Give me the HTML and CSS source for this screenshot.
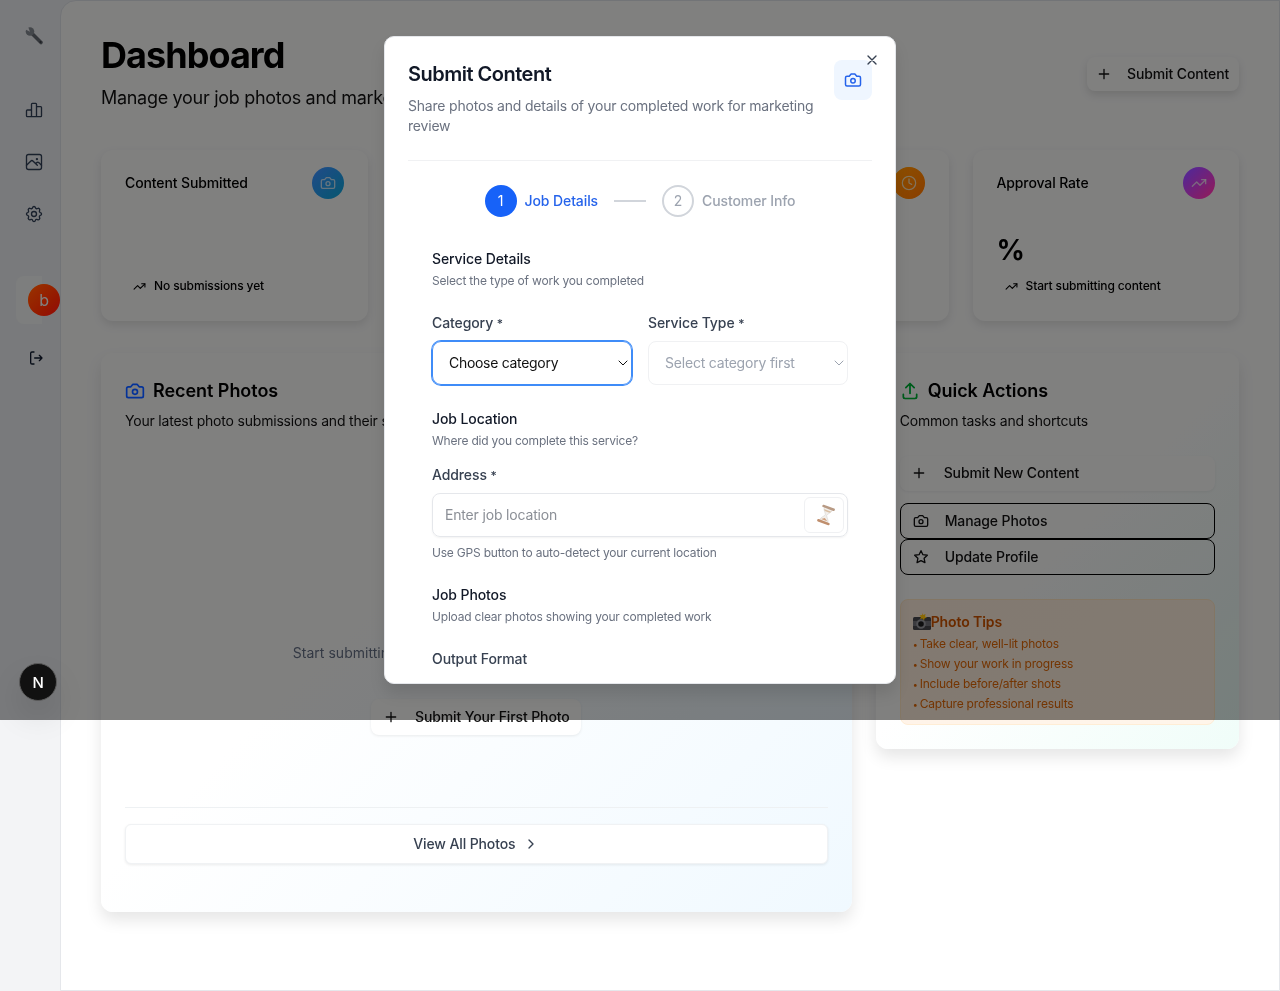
FILE: index.html
```html
<!DOCTYPE html>
<html lang="en">
  <head>
    <meta charset="UTF-8" />
    <meta name="viewport" content="width=device-width, initial-scale=1.0" />
    <title>Dashboard</title>
    <link rel="stylesheet" href="styles.css">
  </head>
  <body>
    <svg class="sprite" aria-hidden="true">
      <symbol id="i-camera" viewBox="0 0 24 24"><path d="M14.5 4h-5L7 7H4a2 2 0 0 0-2 2v9a2 2 0 0 0 2 2h16a2 2 0 0 0 2-2V9a2 2 0 0 0-2-2h-3l-2.5-3z"/><circle cx="12" cy="13" r="3"/></symbol>
      <symbol id="i-trend" viewBox="0 0 24 24"><polyline points="22 7 13.5 15.5 8.5 10.5 2 17"/><polyline points="16 7 22 7 22 13"/></symbol>
      <symbol id="i-plus" viewBox="0 0 24 24"><path d="M5 12h14M12 5v14"/></symbol>
      <symbol id="i-chev" viewBox="0 0 24 24"><path d="m6 9 6 6 6-6"/></symbol>
    </svg>

    <div class="app">
      <aside class="sidebar">
        <svg class="logo" viewBox="0 0 20 20">
          <path d="M7.500 7 17 16.500" stroke="#6a6d73" stroke-width="3.600"/>
          <circle cx="6" cy="5.500" r="4.300" fill="#8a8d93" stroke="none"/>
          <path d="M.5 3 6 5.800 4 .5z" fill="#f3f4f6" stroke="none"/>
          <circle cx="16.500" cy="16" r="1" fill="#3c3e42" stroke="none"/>
        </svg>
        <nav class="side-nav">
          <svg class="side-icon" viewBox="0 0 24 24"><path d="M3 13a1 1 0 0 1 1-1h4a1 1 0 0 1 1 1v6a1 1 0 0 1-1 1H4a1 1 0 0 1-1-1zM15 9a1 1 0 0 1 1-1h4a1 1 0 0 1 1 1v10a1 1 0 0 1-1 1h-4a1 1 0 0 1-1-1zM9 5a1 1 0 0 1 1-1h4a1 1 0 0 1 1 1v14a1 1 0 0 1-1 1h-4a1 1 0 0 1-1-1z"/></svg>
          <svg class="side-icon" viewBox="0 0 24 24"><rect x="3" y="3" width="18" height="18" rx="2.500"/><circle cx="15.500" cy="8.500" r=".6"/><path d="m3 16 5-5c1-1 2-1 3 0l5 5M14 14l1-1c1-1 2-1 3 0l3 3"/></svg>
          <svg class="side-icon" viewBox="0 0 24 24"><path d="M10.300 4.300c.4-1.800 3-1.800 3.400 0a1.700 1.700 0 0 0 2.600 1.100c1.500-.9 3.300.8 2.400 2.400a1.700 1.700 0 0 0 1 2.500c1.800.4 1.800 3 0 3.400a1.700 1.700 0 0 0-1 2.600c.9 1.500-.9 3.300-2.400 2.400a1.700 1.700 0 0 0-2.600 1c-.4 1.800-3 1.800-3.400 0a1.700 1.700 0 0 0-2.600-1c-1.500.9-3.300-.9-2.400-2.400a1.700 1.700 0 0 0-1-2.600c-1.800-.4-1.800-3 0-3.400a1.700 1.700 0 0 0 1-2.500c-.9-1.600.9-3.300 2.400-2.400a1.700 1.700 0 0 0 2.600-1.100z"/><circle cx="12" cy="12" r="3"/></svg>
        </nav>
        <div class="user-box"><span class="avatar">b</span></div>
        <svg class="logout" viewBox="0 0 24 24"><path d="M9 21H6a2 2 0 0 1-2-2V5a2 2 0 0 1 2-2h3M10 12h11M17 16l4-4-4-4"/></svg>
      </aside>

      <main class="main">
        <header class="page-head">
          <div>
            <h1>Dashboard</h1>
            <p class="page-sub">Manage your job photos and marketing content</p>
          </div>
          <button class="btn-top"><svg class="icon"><use href="#i-plus"/></svg>Submit Content</button>
        </header>

        <section class="stats">
          <div class="stat">
            <div class="stat-head"><span>Content Submitted</span><span class="stat-icon blue"><svg class="icon"><use href="#i-camera"/></svg></span></div>
            <div class="stat-value"></div>
            <div class="stat-note"><svg class="icon-sm"><use href="#i-trend"/></svg>No submissions yet</div>
          </div>
          <div class="stat"></div>
          <div class="stat">
            <div class="stat-head stat-head-end"><span class="stat-icon orange"><svg class="icon" viewBox="0 0 24 24"><circle cx="12" cy="12" r="10"/><path d="M12 6v6l4 2"/></svg></span></div>
          </div>
          <div class="stat">
            <div class="stat-head"><span>Approval Rate</span><span class="stat-icon purple"><svg class="icon"><use href="#i-trend"/></svg></span></div>
            <div class="stat-value">%</div>
            <div class="stat-note"><svg class="icon-sm"><use href="#i-trend"/></svg>Start submitting content</div>
          </div>
        </section>

        <section class="lower">
          <div class="panel panel-photos">
            <h2><svg class="icon-title text-blue"><use href="#i-camera"/></svg>Recent Photos</h2>
            <p class="panel-sub">Your latest photo submissions and their status</p>
            <div class="empty">
              <p>Start submitting content to see your recent photos here</p>
              <button class="btn-soft"><svg class="icon"><use href="#i-plus"/></svg>Submit Your First Photo</button>
            </div>
            <div class="panel-foot">
              <button class="btn-all">View All Photos<svg class="icon" viewBox="0 0 24 24"><path d="m9 6 6 6-6 6"/></svg></button>
            </div>
          </div>

          <div class="panel panel-actions">
            <h2><svg class="icon-title text-green" viewBox="0 0 24 24"><path d="M4 16v3a2 2 0 0 0 2 2h12a2 2 0 0 0 2-2v-3M12 15V3M7 8l5-5 5 5"/></svg>Quick Actions</h2>
            <p class="panel-sub">Common tasks and shortcuts</p>
            <div class="actions">
              <button class="action action-main"><svg class="icon"><use href="#i-plus"/></svg>Submit New Content</button>
              <div class="action-pair">
                <button class="action action-line"><svg class="icon"><use href="#i-camera"/></svg>Manage Photos</button>
                <button class="action action-line"><svg class="icon" viewBox="0 0 24 24"><path d="m12 2.500 2.900 6 6.600.9-4.800 4.600 1.200 6.500-5.900-3.100-5.900 3.100 1.200-6.500-4.800-4.600 6.600-.9z"/></svg>Update Profile</button>
              </div>
            </div>
            <div class="tips">
              <h4>
                <svg class="emoji" viewBox="0 0 18 18">
                  <rect x="0" y="4" width="18" height="13" rx="1.500" fill="#4a4a4e"/>
                  <rect x="0" y="8" width="18" height="5" fill="#77777c"/>
                  <circle cx="8" cy="11" r="3.800" fill="#1c1c1e" stroke="#a0a0a4"/>
                  <path d="M9 0l1 2 2.500-1-.5 2.500 2 1-2.500 1-.5 2-1.500-2-2.500.5 1-2-1.500-1.500 2.500-.5z" fill="#ffd24a"/>
                </svg>Photo Tips
              </h4>
              <ul>
                <li><span class="dot">•</span>Take clear, well-lit photos</li>
                <li><span class="dot">•</span>Show your work in progress</li>
                <li><span class="dot">•</span>Include before/after shots</li>
                <li><span class="dot">•</span>Capture professional results</li>
              </ul>
            </div>
          </div>
        </section>
      </main>
    </div>

    <div class="overlay">
      <div class="modal">
        <button class="modal-close"><svg class="icon" viewBox="0 0 24 24"><path d="M18 6 6 18M6 6l12 12"/></svg></button>
        <div class="modal-head">
          <div class="modal-text">
            <h2>Submit Content</h2>
            <p>Share photos and details of your completed work for marketing review</p>
          </div>
          <span class="modal-tile"><svg class="icon-title"><use href="#i-camera"/></svg></span>
        </div>

        <div class="steps">
          <span class="step-num on">1</span><span class="step-label on">Job Details</span>
          <span class="step-line"></span>
          <span class="step-num">2</span><span class="step-label">Customer Info</span>
        </div>

        <form class="form">
          <h3>Service Details</h3>
          <p class="hint">Select the type of work you completed</p>
          <div class="field-row">
            <div>
              <label>Category <span class="req">*</span></label>
              <div class="select focus">Choose category<svg class="chev"><use href="#i-chev"/></svg></div>
            </div>
            <div>
              <label>Service Type <span class="req">*</span></label>
              <div class="select off">Select category first<svg class="chev"><use href="#i-chev"/></svg></div>
            </div>
          </div>

          <h3 class="gap-m">Job Location</h3>
          <p class="hint">Where did you complete this service?</p>
          <label class="gap-s">Address <span class="req">*</span></label>
          <div class="address">
            <input type="text" placeholder="Enter job location" />
            <span class="gps">
              <svg class="hourglass" viewBox="0 0 20 20">
                <g transform="rotate(20 10 10)">
                  <path d="M6 3.500h8c0 3.500-3 4.500-3.300 6.500.3 2 3.300 3 3.300 6.500H6c0-3.500 3-4.500 3.300-6.500C9 8 6 7 6 3.500z" fill="#f2efeb" stroke="#d8d4cf" stroke-width=".5"/>
                  <path d="M6.500 5.500h7l-1.200 1.500H7.700z" fill="#d9bfa4"/>
                  <path d="M7 15l3-2 3 2z" fill="#cf9f7c"/>
                  <rect x="4" y="2" width="12" height="2.200" rx="1" fill="#b89a84"/>
                  <rect x="4" y="15.800" width="12" height="2.200" rx="1" fill="#c08f6e"/>
                </g>
              </svg>
            </span>
          </div>
          <p class="hint gap-help">Use GPS button to auto-detect your current location</p>

          <h3 class="gap-m">Job Photos</h3>
          <p class="hint">Upload clear photos showing your completed work</p>
          <label class="gap-m">Output Format</label>
        </form>
      </div>
    </div>

    <div class="next-badge">N</div>
  </body>
</html>
```

FILE: styles.css
```css
* {
  box-sizing: border-box;
}

html,
body {
  margin: 0;
  height: 991px;
  overflow: hidden;
}

body {
  font-family: Inter, "Liberation Sans", sans-serif;
  letter-spacing: -0.2px;
  color: #000;
  background: #f3f4f6;
}

h1,
h2,
h3,
h4,
p,
ul {
  margin: 0;
  padding: 0;
}

button {
  font-family: inherit;
  line-height: 20px;
  letter-spacing: -0.12px;
  cursor: pointer;
}

.sprite {
  display: none;
}

svg {
  fill: none;
  stroke: currentColor;
  stroke-width: 2;
  stroke-linecap: round;
  stroke-linejoin: round;
  flex: none;
}

.icon {
  width: 16px;
  height: 16px;
}

.icon-sm {
  width: 13px;
  height: 13px;
}

.icon-title {
  width: 20px;
  height: 20px;
}

.text-blue {
  color: #2563eb;
}

.text-green {
  color: #16a34a;
}

.app {
  display: flex;
  height: 991px;
}

/* sidebar */
.sidebar {
  position: relative;
  z-index: 1;
  flex: none;
  width: 60px;
  display: flex;
  flex-direction: column;
  padding-top: 26px;
  color: #374151;
}

.logo {
  width: 20px;
  height: 20px;
  margin-left: 24px;
}

.side-nav {
  display: flex;
  flex-direction: column;
  gap: 32px;
  margin: 54px 0 0 24px;
}

.side-icon {
  width: 20px;
  height: 20px;
  stroke-width: 1.600;
}

.user-box {
  width: 26px;
  height: 48px;
  margin: 52px 0 0 16px;
  padding: 8px 0 0 12px;
  background: #fafbfb;
  border-radius: 8px 0 0 8px;
}

.avatar {
  display: flex;
  align-items: center;
  justify-content: center;
  width: 32px;
  height: 32px;
  border-radius: 50%;
  color: #fff;
  font-size: 16px;
  background: linear-gradient(135deg, #f97316, #dc2626);
}

.logout {
  width: 16px;
  height: 16px;
  margin: 26px 0 0 28px;
  color: #111827;
}

/* main */
.main {
  flex: 1;
  min-width: 0;
  padding: 34px 40px 0;
  background: #fff;
  border: 1px solid #e5e7eb;
  border-top-left-radius: 16px;
}

.page-head {
  display: flex;
  justify-content: space-between;
  align-items: center;
  margin-bottom: 38px;
}

h1 {
  font-size: 36px;
  line-height: 40px;
  font-weight: 700;
  letter-spacing: -0.95px;
}

.page-sub {
  margin-top: 9px;
  font-size: 18px;
  line-height: 28px;
  letter-spacing: -0.3px;
  color: #111;
}

.btn-top {
  display: flex;
  align-items: center;
  gap: 15px;
  width: 152px;
  height: 34px;
  padding: 0 9px;
  border: 0;
  border-radius: 8px;
  font-size: 14px;
  font-weight: 500;
  white-space: nowrap;
  color: #111;
  background: #fff;
  box-shadow: 0 4px 8px rgba(0, 0, 0, 0.12);
}

.stats {
  display: grid;
  grid-template-columns: repeat(4, 1fr);
  gap: 24px;
  margin-bottom: 32px;
}

.stat {
  height: 171px;
  padding: 17px 24px 0;
  border-radius: 12px;
  background: #fff;
  box-shadow: 0 4px 10px rgba(0, 0, 0, 0.1);
}

.stat-head {
  display: flex;
  justify-content: space-between;
  align-items: center;
  height: 32px;
  font-size: 14px;
  line-height: 20px;
  letter-spacing: -0.12px;
  font-weight: 500;
}

.stat-head-end {
  justify-content: flex-end;
}

.stat-icon {
  display: flex;
  align-items: center;
  justify-content: center;
  width: 32px;
  height: 32px;
  border-radius: 50%;
  color: rgba(255, 255, 255, 0.75);
}

.blue {
  background: linear-gradient(135deg, #5b93e6, #36a3c4);
}

.orange {
  background: linear-gradient(135deg, #f5a524, #e8832a);
}

.purple {
  background: linear-gradient(135deg, #8b5cf6, #ec4899);
}

.stat-value {
  height: 36px;
  margin-top: 33px;
  font-size: 28px;
  line-height: 36px;
  font-weight: 700;
}

.stat-note {
  display: flex;
  align-items: center;
  gap: 8px;
  margin-top: 10px;
  padding-left: 8px;
  font-size: 12px;
  line-height: 16px;
  letter-spacing: -0.12px;
  font-weight: 500;
}

.lower {
  display: grid;
  grid-template-columns: repeat(3, 1fr);
  gap: 24px;
  align-items: start;
}

.panel {
  padding: 24px;
  border-radius: 12px;
  box-shadow: 0 8px 16px rgba(0, 0, 0, 0.1);
}

.panel-photos {
  grid-column: span 2;
  padding-bottom: 48px;
  background: linear-gradient(135deg, #fff 40%, #f0f9ff);
}

.panel-actions {
  background: linear-gradient(135deg, #fff 50%, #f0fdf9);
}

.panel h2 {
  display: flex;
  align-items: center;
  gap: 8px;
  font-size: 18px;
  line-height: 28px;
  letter-spacing: -0.05px;
  font-weight: 600;
}

.panel-sub {
  margin-top: 6px;
  font-size: 14px;
  line-height: 20px;
  color: #111;
}

.empty {
  display: flex;
  flex-direction: column;
  align-items: center;
  padding: 212px 0 72px;
  border-bottom: 1px solid #eef1f3;
}

.empty p {
  font-size: 14px;
  line-height: 20px;
  letter-spacing: 0.03px;
  color: #6b7280;
}

.btn-soft {
  display: flex;
  align-items: center;
  justify-content: center;
  gap: 16px;
  width: 210px;
  height: 36px;
  margin-top: 36px;
  border: 0;
  border-radius: 8px;
  font-size: 14px;
  font-weight: 500;
  color: #111;
  background: #fff;
  box-shadow: 0 1px 3px rgba(0, 0, 0, 0.08);
}

.panel-foot {
  padding-top: 16px;
}

.btn-all {
  display: flex;
  align-items: center;
  justify-content: center;
  gap: 8px;
  width: 100%;
  height: 40px;
  border: 1px solid #f0f2f4;
  border-radius: 6px;
  font-size: 14px;
  font-weight: 500;
  color: #374151;
  background: #fff;
  box-shadow: 0 1px 3px rgba(0, 0, 0, 0.08);
}

.actions {
  display: flex;
  flex-direction: column;
  gap: 12px;
  margin-top: 25px;
}

.action {
  display: flex;
  align-items: center;
  gap: 16px;
  width: 100%;
  height: 35px;
  padding: 0 12px;
  border-radius: 8px;
  font-size: 14px;
  font-weight: 500;
  color: #111;
  background: transparent;
}

.action-main {
  border: 0;
  padding: 0 11px 1px;
  gap: 17px;
  background: #fff;
  box-shadow: 0 1px 3px rgba(0, 0, 0, 0.06);
}

.action-pair {
  display: flex;
  flex-direction: column;
}

.action-line {
  height: 36px;
  border: 1px solid #000;
}

.tips {
  height: 126px;
  margin-top: 24px;
  padding: 12px;
  border-radius: 8px;
  border: 1px solid #ffedd5;
  background: linear-gradient(135deg, #fff3e8, #fff5ea);
}

.tips h4 {
  display: flex;
  align-items: center;
  font-size: 14px;
  line-height: 20px;
  letter-spacing: -0.1px;
  font-weight: 600;
  color: #b05a1c;
}

.emoji {
  width: 18px;
  height: 18px;
  stroke: none;
}

.tips ul {
  margin-top: 2px;
  list-style: none;
  font-size: 12px;
  line-height: 20px;
  color: #c4702c;
}

.tips li {
  height: 20px;
}

.dot {
  display: inline-block;
  width: 7px;
  font-size: 9px;
  line-height: 1;
}

/* dialog */
.overlay {
  position: absolute;
  z-index: 2;
  top: 0;
  left: 0;
  width: 1280px;
  height: 720px;
  display: flex;
  align-items: center;
  justify-content: center;
  backdrop-filter: brightness(0.5) saturate(1.5);
}

.modal {
  position: relative;
  width: 512px;
  height: 648px;
  padding: 23px;
  overflow: hidden;
  border: 1px solid #e5e7eb;
  border-radius: 10px;
  background: #fff;
  box-shadow: 0 10px 15px rgba(0, 0, 0, 0.1);
}

.modal-close {
  position: absolute;
  top: 15px;
  right: 15px;
  display: flex;
  padding: 0;
  border: 0;
  color: #374151;
  background: none;
}

.modal-head {
  display: flex;
  gap: 16px;
  padding-bottom: 24px;
  border-bottom: 1px solid #f0f1f3;
}

.modal-text h2 {
  font-size: 20px;
  line-height: 28px;
  letter-spacing: -0.5px;
  font-weight: 600;
  color: #111827;
}

.modal-text p {
  margin-top: 8px;
  font-size: 14px;
  line-height: 20px;
  color: #6b7280;
}

.modal-tile {
  flex: none;
  display: flex;
  align-items: center;
  justify-content: center;
  width: 38px;
  height: 40px;
  border-radius: 8px;
  color: #2563eb;
  background: #eff6ff;
}

.modal-tile .icon-title {
  width: 18px;
  height: 18px;
}

.steps {
  display: flex;
  justify-content: center;
  align-items: center;
  margin-top: 24px;
  line-height: 20px;
}

.step-num {
  display: flex;
  align-items: center;
  justify-content: center;
  width: 32px;
  height: 32px;
  border: 2px solid #d1d5db;
  border-radius: 50%;
  font-size: 14px;
  color: #9ca3af;
}

.step-num.on {
  border: 0;
  color: #fff;
  background: #1762f8;
}

.step-label {
  margin-left: 8px;
  font-size: 14px;
  font-weight: 500;
  letter-spacing: -0.1px;
  color: #9ca3af;
}

.step-label.on {
  color: #2563eb;
}

.step-line {
  width: 32px;
  height: 2px;
  margin: 0 16px;
  background: #d1d5db;
}

.form {
  padding: 32px 24px 0;
}

.form h3 {
  font-size: 14px;
  line-height: 20px;
  letter-spacing: -0.1px;
  font-weight: 500;
  color: #111827;
}

.form label {
  display: block;
  font-size: 14px;
  line-height: 20px;
  letter-spacing: -0.1px;
  font-weight: 500;
  color: #374151;
}

.req {
  font-size: 12px;
  line-height: 0;
}

.hint {
  margin-top: 4px;
  font-size: 12px;
  line-height: 16px;
  color: #6b7280;
}

.form .gap-s {
  margin-top: 16px;
}

.form .gap-m {
  margin-top: 24px;
}

.gap-help {
  margin-top: 8px;
}

.field-row {
  display: grid;
  grid-template-columns: 1fr 1fr;
  gap: 16px;
  margin-top: 24px;
}

.select {
  display: flex;
  align-items: center;
  justify-content: space-between;
  height: 44px;
  margin-top: 8px;
  padding-left: 16px;
  border: 1px solid #f0f1f3;
  border-radius: 8px;
  font-size: 14px;
  line-height: 20px;
  letter-spacing: -0.3px;
  color: #111;
}

.select.focus {
  border-color: #3f8cf8;
  border-radius: 9px;
  box-shadow: 0 0 0 1px #3f8cf8;
}

.select.off {
  letter-spacing: -0.2px;
  color: #9ca3af;
}

.chev {
  width: 16px;
  height: 16px;
  stroke-width: 1.500;
}

.address {
  display: flex;
  align-items: center;
  height: 44px;
  margin-top: 8px;
  padding: 0 3px 0 12px;
  border: 1px solid #e5e7eb;
  border-radius: 8px;
  box-shadow: 0 1px 2px rgba(0, 0, 0, 0.05);
}

.address input {
  flex: 1;
  min-width: 0;
  border: 0;
  padding: 0 0 1px;
  outline: 0;
  font-family: inherit;
  font-size: 14px;
  letter-spacing: -0.17px;
}

.address input::placeholder {
  color: #8b8f96;
}

.gps {
  display: flex;
  align-items: center;
  justify-content: center;
  width: 40px;
  height: 36px;
  padding-left: 3px;
  border: 1px solid #f0f1f3;
  border-radius: 6px;
}

.hourglass {
  width: 22px;
  height: 22px;
  stroke: none;
}

.next-badge {
  position: absolute;
  z-index: 3;
  top: 663px;
  left: 19px;
  width: 38px;
  height: 38px;
  display: flex;
  align-items: center;
  justify-content: center;
  border: 1px solid #5a5a5a;
  border-radius: 50%;
  font-size: 15px;
  font-weight: 500;
  color: #fff;
  background: #111;
  box-shadow: 0 16px 32px rgba(0, 0, 0, 0.1);
}
```
